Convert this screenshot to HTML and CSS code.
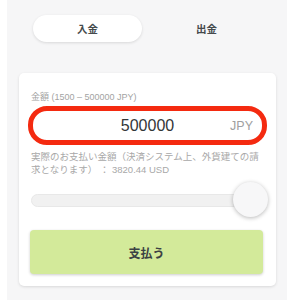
FILE: index.html
```html
<!DOCTYPE html>
<html lang="ja">
<head>
<meta charset="utf-8">
<link rel="stylesheet" href="styles.css">
</head>
<body>
<div class="panel">
  <div class="tabs">
    <div class="tab active">入金</div>
    <div class="tab">出金</div>
  </div>
  <div class="card">
    <div class="label">金額 (1500 – 500000 JPY)</div>
    <div class="amount">
      <span class="value">500000</span>
      <span class="unit">JPY</span>
    </div>
    <p class="note">実際のお支払い金額（決済システム上、外貨建ての請求となります） ： 3820.44 USD</p>
    <div class="slider">
      <div class="track"></div>
      <div class="thumb"></div>
    </div>
    <div class="pay">支払う</div>
  </div>
</div>
</body>
</html>
```
FILE: styles.css
```css
html, body {
  margin: 0;
  padding: 0;
  background: #ffffff;
}
body {
  font-family: "Liberation Sans", "Noto Sans CJK JP", sans-serif;
}
.panel {
  margin-left: 7px;
  width: 280px;
  height: 300px;
  background: #f6f6f7;
  padding-top: 15px;
  box-sizing: border-box;
}
.tabs {
  display: grid;
  grid-template-columns: 1fr 1fr;
  column-gap: 10px;
  padding: 0 26px;
  height: 27px;
}
.tab {
  display: flex;
  align-items: center;
  justify-content: center;
  font-family: "Noto Sans CJK JP", sans-serif;
  font-weight: 700;
  font-size: 10.5px;
  color: #454a4c;
  border-radius: 14px;
}
.tab.active {
  background: #ffffff;
  box-shadow: 0 1px 3px rgba(0, 0, 0, 0.12);
}
.card {
  margin: 31px 11px 0 12px;
  background: #ffffff;
  border-radius: 5px;
  box-shadow: 0 1px 3px rgba(0, 0, 0, 0.12);
  padding: 19px 12px 12px 12px;
}
.label {
  font-size: 9px;
  line-height: 11px;
  color: #a3a3a3;
}
.amount {
  margin: 3px -3px 0 -3px;
  height: 39px;
  box-sizing: border-box;
  border: 5px solid #f42a10;
  border-radius: 19px;
  display: grid;
  grid-template-columns: 1fr auto 1fr;
  align-items: center;
  padding: 0 9px;
}
.value {
  grid-column: 2;
  font-size: 16px;
  color: #333638;
}
.unit {
  grid-column: 3;
  justify-self: end;
  font-size: 12.5px;
  color: #a0a0a0;
}
.note {
  margin: 6px 0 0 0;
  font-size: 9.5px;
  line-height: 12.5px;
  color: #a8a8a8;
}
.slider {
  position: relative;
  margin-top: 7px;
  height: 34px;
  display: flex;
  align-items: center;
}
.track {
  flex: 1;
  height: 13px;
  box-sizing: border-box;
  background: #f1f1f1;
  border: 1px solid #e8e8e8;
  border-radius: 7px;
}
.thumb {
  position: absolute;
  right: -4px;
  top: -1px;
  width: 35px;
  height: 35px;
  border-radius: 50%;
  background: #f7f7f8;
  box-shadow: 0 1px 4px rgba(0, 0, 0, 0.28);
}
.pay {
  margin: 13px 1px 0 -1px;
  height: 44px;
  border-radius: 4px;
  background: #d3ea9a;
  box-shadow: 0 1px 3px rgba(0, 0, 0, 0.2);
  display: flex;
  align-items: center;
  justify-content: center;
  font-family: "Noto Sans CJK JP", sans-serif;
  font-weight: 700;
  font-size: 12px;
  color: #3c4244;
}
```
